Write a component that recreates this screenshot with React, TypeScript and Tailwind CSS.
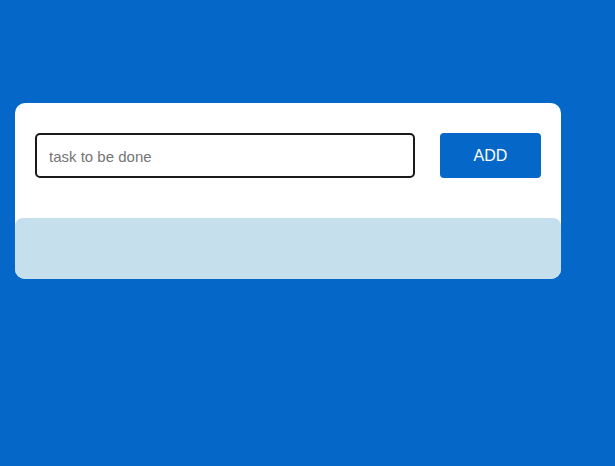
export default function App() {
  return (
    <div className="min-h-[466px] w-full bg-[#0568c9] pt-[103px] pl-[15px] font-['Liberation_Sans',Arial,sans-serif]">
      <div className="w-[546px] bg-white rounded-[10px] overflow-hidden">
        {/* form */}
        <div className="flex items-center gap-[25px] px-5 pt-[30px] pb-10">
          <input
            type="text"
            placeholder="task to be done"
            className="w-[380px] h-[45px] border-2 border-[#1a1a1a] rounded-[5px] px-3 pt-px text-[15px] text-black placeholder:text-[#757575] outline-none"
          />
          <button className="w-[101px] h-[45px] bg-[#0568c9] rounded-[4px] text-white text-[16px]">
            ADD
          </button>
        </div>

        {/* task list */}
        <div className="h-[61px] bg-[#c5e0ec] rounded-t-[8px]"></div>
      </div>
    </div>
  );
}
